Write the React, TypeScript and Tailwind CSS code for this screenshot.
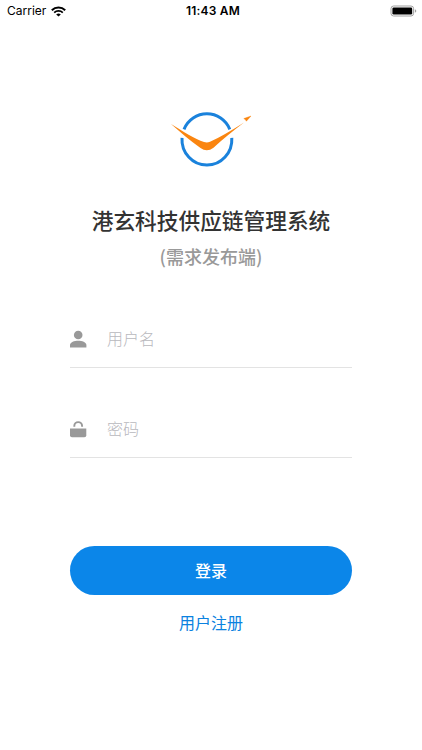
import { useState } from "react";
import type { ReactNode } from "react";

export default function App() {
  return (
    <main className="flex h-[750px] w-full flex-col overflow-hidden bg-white font-['Noto_Sans_CJK_SC',sans-serif]">
      <StatusBar />
      <LoginForm />
    </main>
  );
}

function StatusBar() {
  return (
    <header className="grid h-[22px] shrink-0 grid-cols-3 items-center pr-[5px] pl-[7px] font-[Inter,sans-serif] text-xs text-black">
      <div className="flex items-center gap-[5px]">
        <span className="text-[12px]">Carrier</span>
        <WifiIcon />
      </div>
      <span className="pl-[2px] text-center text-[12px] font-semibold tracking-[0.2px] whitespace-nowrap">
        11:43 AM
      </span>
      <div className="flex justify-end">
        <BatteryIcon />
      </div>
    </header>
  );
}

function LoginForm() {
  const [username, setUsername] = useState("");
  const [password, setPassword] = useState("");

  return (
    <form className="flex flex-col px-[70px]" onSubmit={(e) => e.preventDefault()}>
      <Logo />
      <h1 className="mt-[37px] text-center text-[21.7px] leading-8 font-medium whitespace-nowrap text-[#333333]">
        港玄科技供应链管理系统
      </h1>
      <p className="mt-[7px] text-center text-[18px] leading-[26px] font-medium text-[#999999]">
        (需求发布端)
      </p>

      <Field icon={<UserIcon />} className="mt-[41px]">
        <input
          type="text"
          aria-label="用户名"
          placeholder="用户名"
          value={username}
          onChange={(e) => setUsername(e.target.value)}
          className="w-full bg-transparent pb-[2px] text-[16px] font-light outline-none placeholder:text-[#b8b8bd]"
        />
      </Field>
      <Field icon={<LockIcon />} className="mt-[32px]">
        <input
          type="password"
          aria-label="密码"
          placeholder="密码"
          value={password}
          onChange={(e) => setPassword(e.target.value)}
          className="w-full bg-transparent pb-[2px] text-[16px] font-light outline-none placeholder:text-[#b8b8bd]"
        />
      </Field>

      <button
        type="submit"
        className="mt-[88px] h-[49px] rounded-full bg-[#0b86e9] pb-[2px] text-[16px] font-medium text-white"
      >
        登录
      </button>
      <a href="#" className="mt-[15px] self-center text-[16px] leading-6 text-[#0b82e0]">
        用户注册
      </a>
    </form>
  );
}

function Field({
  icon,
  className,
  children,
}: {
  icon: ReactNode;
  className: string;
  children: ReactNode;
}) {
  return (
    <label className={`flex h-[58px] items-center gap-[20px] border-b border-[#e3e3e3] ${className}`}>
      {icon}
      {children}
    </label>
  );
}

function Logo() {
  return (
    <svg
      aria-hidden
      viewBox="0 0 84 60"
      className="mt-[85px] ml-[99px] h-[60px] w-[84px] shrink-0"
      fill="none"
    >
      {/* ring, broken where the wings cross it */}
      <path d="M15 22.3A24.9 25.5 0 0 1 60.8 22.3" stroke="#1a82dc" strokeWidth="3" />
      <path
        d="M13 30.8A24.9 25.7 0 0 0 37.9 58.1A24.9 25.7 0 0 0 62.8 30.8"
        stroke="#1a82dc"
        strokeWidth="3"
      />
      <path
        d="M2 17C14 24.6 26 32.1 35 35Q38 36 41 34.8Q54 29 75 15.5C64 24 54 32.2 44.5 40.7Q38 45.6 31.5 41C21 33.8 11 25 2 17Z"
        fill="#fa8510"
      />
      <path d="M82 9L74.8 11.6L76.2 12.4L77.4 14.2Z" fill="#fa8510" stroke="#fa8510" strokeWidth=".4" />
    </svg>
  );
}

function UserIcon() {
  return (
    <svg aria-hidden viewBox="0 0 17 18" className="h-[18px] w-[17px] shrink-0" fill="#999999">
      <circle cx="8.2" cy="5" r="4.3" />
      <path d="M0 17.6V15C0 12.1 4.4 10.7 8.2 10.7S16.4 12.1 16.4 15V17.6Z" />
    </svg>
  );
}

function LockIcon() {
  return (
    <svg aria-hidden viewBox="0 0 17 18" className="h-[18px] w-[17px] shrink-0" fill="none">
      <path d="M4.3 6.8V6A3.9 3.9 0 0 1 12.1 6V6.8" stroke="#999999" strokeWidth="1.9" />
      <path d="M0 8.6H16.3V15.2Q16.3 17.2 14.3 17.2H2Q0 17.2 0 15.2Z" fill="#999999" />
    </svg>
  );
}

function WifiIcon() {
  return (
    <svg aria-hidden viewBox="0 0 15 11" className="h-[11px] w-[15px]" fill="none" stroke="#000">
      <path d="M.8 4.2C4.6.5 10.4.5 14.2 4.2" strokeWidth="2" />
      <path d="M3.2 6.6C5.6 4.4 9.4 4.4 11.8 6.6" strokeWidth="1.8" />
      <path d="M7.5 10.6L5.2 8.4Q7.5 6.7 9.8 8.4Z" fill="#000" stroke="none" />
    </svg>
  );
}

function BatteryIcon() {
  return (
    <svg aria-hidden viewBox="0 0 27 12" className="h-[12px] w-[27px]" fill="none">
      <rect x="1" y="1" width="22.6" height="10" rx="2.6" stroke="#a0a0a0" strokeWidth="1" />
      <rect x="2.4" y="2.4" width="19.8" height="7.2" rx="1.3" fill="#000" />
      <path d="M24.9 4.2Q26.3 4.8 26.3 6T24.9 7.8Z" fill="#a0a0a0" />
    </svg>
  );
}
